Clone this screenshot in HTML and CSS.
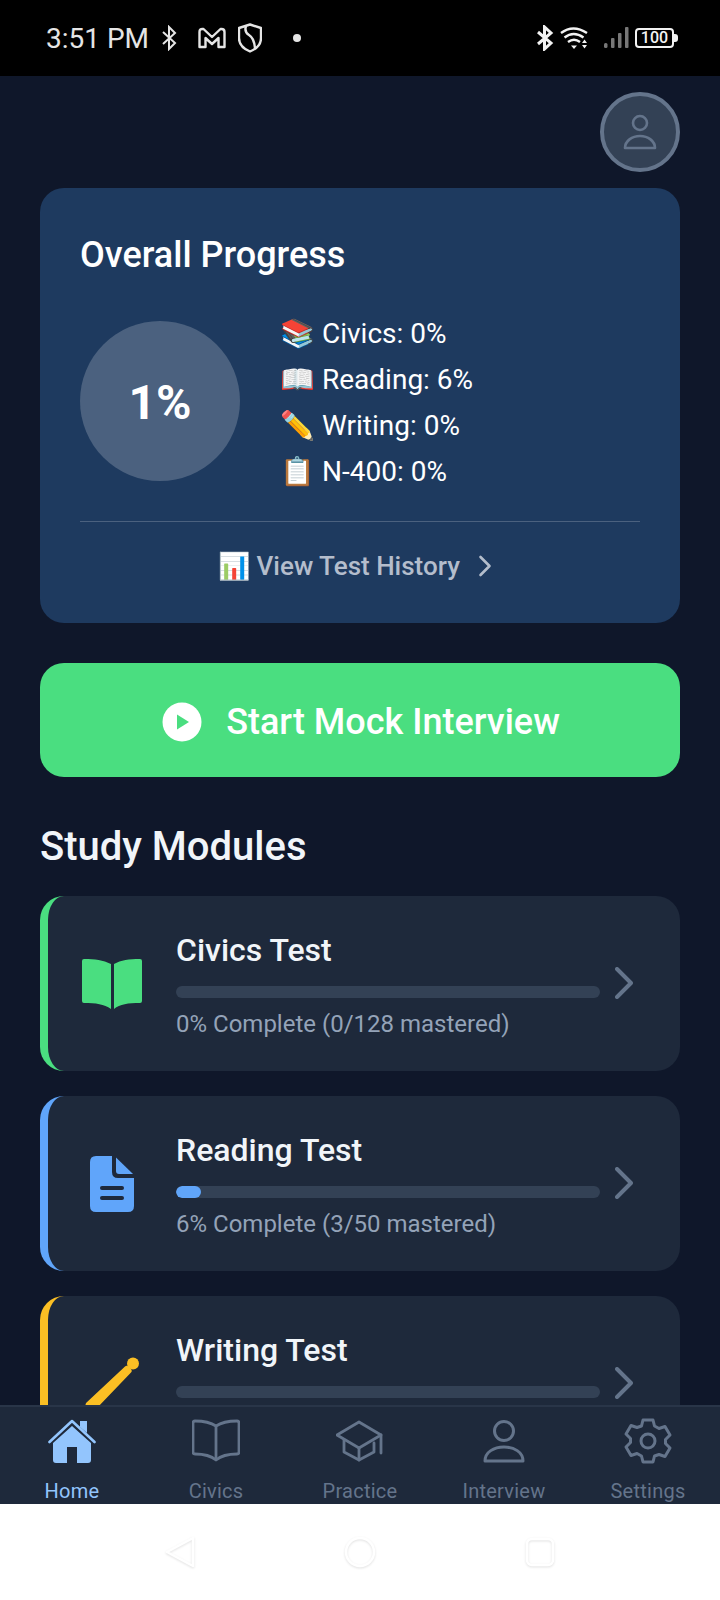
FILE: index.html
```html
<!DOCTYPE html>
<html>
<head>
    <title>Citizenship Study</title>
    <link rel="stylesheet" href="styles.css">
</head>
<body>
    <div class="app">
        <div class="status-bar">
            <span class="clock">3:51 PM</span>
            <svg class="st-bt" width="16" height="26" viewBox="0 0 16 26" fill="none" stroke="#e5e5e5" stroke-width="2"><path d="M2 7l12 11-6 6V2l6 6L2 19"/></svg>
            <svg class="st-m" width="28" height="22" viewBox="0 0 28 22" fill="none" stroke="#e5e5e5" stroke-width="2.400" stroke-linejoin="round"><path d="M1.500 20V5q0-3 3-3h1L14 10l8.500-8h1q3 0 3 3v15h-6V11l-6.500 6-6.500-6v9z"/></svg>
            <svg class="st-shield" width="24" height="30" viewBox="0 0 24 30" fill="none" stroke="#e5e5e5" stroke-width="2.400" stroke-linejoin="round"><path d="M12 1.500 23 5v10q0 9-11 13.500Q1 24 1 15V5z"/><path d="M8 3q-2 6 3 9t6 13"/></svg>
            <span class="st-dot"></span>
            <span class="st-spacer"></span>
            <svg class="st-bt2" width="18" height="26" viewBox="0 0 18 26" fill="none" stroke="#f2f2f2" stroke-width="3"><path d="M2 7l13 11-6.500 6V2L15 8 2 19"/></svg>
            <svg class="st-wifi" width="28" height="24" viewBox="0 0 28 24" fill="none" stroke="#f2f2f2" stroke-width="2.400"><path d="M1 7q12-9 26 0"/><path d="M4.500 11.500q9-7 19 0"/><path d="M8 16q6-4.500 12 0"/><path d="M11 19.500h6l-3 3.500z" fill="#f2f2f2" stroke="none"/><path d="M22 17h5l-2.500-3.500zM22 19h5l-2.500 3.500z" fill="#f2f2f2" stroke="none"/></svg>
            <svg class="st-signal" width="25" height="22" viewBox="0 0 25 22" fill="#777"><rect x="0" y="16" width="3.500" height="5" rx="1.500"/><rect x="7" y="11" width="3.500" height="10" rx="1"/><rect x="14" y="6" width="3.500" height="15" rx="1"/><rect x="21" y="0" width="3.500" height="21" rx="1"/></svg>
            <div class="battery"><span class="battery-body">100</span><span class="battery-tip"></span></div>
        </div>

        <div class="main">
            <div class="top-row">
                <div class="avatar">
                    <svg width="40" height="40" viewBox="0 0 40 40" fill="none" stroke="#64748b" stroke-width="2.600"><circle cx="20" cy="11" r="7"/><path d="M5 36c0-7 7-12 15-12s15 5 15 12z" stroke-linejoin="round"/></svg>
                </div>
            </div>

            <div class="progress-card">
                <h2 class="progress-title">Overall Progress</h2>
                <div class="progress-row">
                    <div class="progress-circle">1%</div>
                    <div class="progress-stats">
                        <div class="stat"><span class="emoji">📚</span>Civics: 0%</div>
                        <div class="stat"><span class="emoji">📖</span>Reading: 6%</div>
                        <div class="stat"><span class="emoji">✏️</span>Writing: 0%</div>
                        <div class="stat"><span class="emoji">📋</span>N-400: 0%</div>
                    </div>
                </div>
                <div class="history">
                    <span>📊 View Test History</span>
                    <svg width="14" height="22" viewBox="0 0 14 22" fill="none" stroke="#b4bdcc" stroke-width="2.600" stroke-linecap="round" stroke-linejoin="round"><path d="M2.500 2l9 9-9 9"/></svg>
                </div>
            </div>

            <div class="start-btn">
                <svg width="40" height="40" viewBox="0 0 40 40"><circle cx="20" cy="20" r="19.500" fill="#fff"/><path d="M15 12.500v15l12-7.500z" fill="#4ade80"/></svg>
                <span>Start Mock Interview</span>
            </div>

            <h2 class="section-title">Study Modules</h2>

            <div class="module green">
                <div class="module-icon">
                    <svg width="60" height="50" viewBox="0 0 60 50" fill="#4ade80"><path d="M0 2q0-2 2-2c11 0 19 1 27 5v45c-7-5-15-6-27-6q-2 0-2-2z"/><path d="M60 2q0-2-2-2C47 0 39 1 32 5v45c6-5 14-6 26-6q2 0 2-2z"/></svg>
                </div>
                <div class="module-body">
                    <div class="module-name">Civics Test</div>
                    <div class="bar"></div>
                    <div class="module-sub">0% Complete (0/128 mastered)</div>
                </div>
                <svg class="chevron" width="18" height="32" viewBox="0 0 18 32" fill="none" stroke="#64748b" stroke-width="4" stroke-linecap="round" stroke-linejoin="round"><path d="M2 2l14 14L2 30"/></svg>
            </div>

            <div class="module blue">
                <div class="module-icon">
                    <svg width="44" height="56" viewBox="0 0 44 56" fill="#60a5fa"><path d="M6 0h16v16q0 6 6 6h16v28q0 6-6 6H6q-6 0-6-6V6q0-6 6-6z"/><path d="M26 1.500 43 18H29q-3 0-3-3z"/><rect x="10" y="30" width="24" height="4" rx="2" fill="#1e293b"/><rect x="10" y="40" width="24" height="4" rx="2" fill="#1e293b"/></svg>
                </div>
                <div class="module-body">
                    <div class="module-name">Reading Test</div>
                    <div class="bar"><div class="bar-fill" style="width: 6%"></div></div>
                    <div class="module-sub">6% Complete (3/50 mastered)</div>
                </div>
                <svg class="chevron" width="18" height="32" viewBox="0 0 18 32" fill="none" stroke="#64748b" stroke-width="4" stroke-linecap="round" stroke-linejoin="round"><path d="M2 2l14 14L2 30"/></svg>
            </div>

            <div class="module yellow">
                <div class="module-icon">
                    <svg width="60" height="60" viewBox="0 0 60 60" fill="#fbbf24"><circle cx="51" cy="9.500" r="6"/><path d="M43 12.500q1.500-1.500 3.500 0l2.500 2.500q1.500 2 0 3.500L15 54 1 60l3-11z"/></svg>
                </div>
                <div class="module-body">
                    <div class="module-name">Writing Test</div>
                    <div class="bar"></div>
                    <div class="module-sub"></div>
                </div>
                <svg class="chevron" width="18" height="32" viewBox="0 0 18 32" fill="none" stroke="#64748b" stroke-width="4" stroke-linecap="round" stroke-linejoin="round"><path d="M2 2l14 14L2 30"/></svg>
            </div>
        </div>

        <div class="nav">
            <div class="nav-item active">
                <svg width="48" height="46" viewBox="0 0 48 46" fill="#93c5fd"><path d="M32 3h7v12l-7-6z"/><path d="M24 8 5 25v17q0 3 3 3h11V29h10v16h11q3 0 3-3V25z"/><path d="M1.500 24 24 3l22.500 21" fill="none" stroke="#93c5fd" stroke-width="2.600" stroke-linecap="round" stroke-linejoin="round"/></svg>
                <span>Home</span>
            </div>
            <div class="nav-item">
                <svg width="48" height="46" viewBox="0 0 48 46" fill="none" stroke="#64748b" stroke-width="2.800" stroke-linejoin="round"><path d="M24 8C18 4 10 3 3 3q-2 0-2 2v29q0 2 2 2c8 0 15 1 21 6 6-5 13-6 21-6q2 0 2-2V5q0-2-2-2C38 3 30 4 24 8z"/><path d="M24 8v34"/></svg>
                <span>Civics</span>
            </div>
            <div class="nav-item">
                <svg width="48" height="46" viewBox="0 0 48 46" fill="none" stroke="#64748b" stroke-width="2.800" stroke-linejoin="round" stroke-linecap="round"><path d="M23 4 1 17l22 13 22-13z"/><path d="M8 22v12l15 8 15-8V25"/><path d="M23 30v12"/><path d="M45 17v18"/></svg>
                <span>Practice</span>
            </div>
            <div class="nav-item">
                <svg width="48" height="46" viewBox="0 0 48 46" fill="none" stroke="#64748b" stroke-width="3" stroke-linejoin="round"><circle cx="24" cy="13" r="9.500"/><path d="M5 43c0-9 9-14 19-14s19 5 19 14z"/></svg>
                <span>Interview</span>
            </div>
            <div class="nav-item">
                <svg width="48" height="46" viewBox="0 0 48 46" fill="none" stroke="#64748b" stroke-width="3" stroke-linejoin="round"><circle cx="24" cy="23" r="7"/><path d="M19 2h10l1.500 6 4.500 2.500 6-2 5 8.500-4.500 4.500v4l4.500 4.500-5 8.500-6-2L30.500 38 29 44H19l-1.500-6-4.500-2.500-6 2-5-8.500 4.500-4.500v-4L2 16l5-8.500 6 2L17.500 8z"/></svg>
                <span>Settings</span>
            </div>
        </div>

        <div class="system-bar">
            <svg class="sys-icon" width="32" height="32" viewBox="0 0 32 32" fill="none" stroke="#fff" stroke-width="2.500" stroke-linejoin="round"><path d="M29 2v28L3 16z"/></svg>
            <svg class="sys-icon" width="32" height="32" viewBox="0 0 32 32" fill="none" stroke="#fff" stroke-width="2.500"><circle cx="16" cy="16" r="14"/></svg>
            <svg class="sys-icon" width="32" height="32" viewBox="0 0 32 32" fill="none" stroke="#fff" stroke-width="2.500"><rect x="3" y="3" width="26" height="26" rx="5"/></svg>
        </div>
    </div>
</body>
</html>
```
FILE: styles.css
```css
* {
    box-sizing: border-box;
}

body {
    margin: 0;
    font-family: Roboto, "Noto Sans", sans-serif;
    background-color: #0f172a;
}

.app {
    width: 720px;
    height: 1600px;
    display: flex;
    flex-direction: column;
    overflow: hidden;
}

/* Status bar */
.status-bar {
    height: 76px;
    flex-shrink: 0;
    background-color: #000;
    display: flex;
    align-items: center;
    padding: 0 42px 0 46px;
    color: #e5e5e5;
}

.clock {
    font-size: 28px;
    margin-right: 12px;
}

.st-bt {
    margin-right: 21px;
}

.st-m {
    margin-right: 12px;
}

.st-dot {
    width: 8px;
    height: 8px;
    border-radius: 50%;
    background-color: #e5e5e5;
    margin-left: 31px;
}

.st-spacer {
    flex: 1;
}

.st-bt2 {
    margin-right: 6px;
}

.st-wifi {
    margin-right: 16px;
}

.st-signal {
    margin-right: 6px;
}

.battery {
    display: flex;
    align-items: center;
}

.battery-body {
    width: 39px;
    height: 20px;
    border: 2.500px solid #f2f2f2;
    border-radius: 4px;
    font-size: 16px;
    font-weight: 500;
    line-height: 15px;
    text-align: center;
    color: #f2f2f2;
}

.battery-tip {
    width: 4px;
    height: 8px;
    background-color: #f2f2f2;
    border-radius: 0 3px 3px 0;
}

/* Main scrolling area */
.main {
    flex: 1;
    overflow: hidden;
    padding: 16px 40px 0;
}

.top-row {
    display: flex;
    justify-content: flex-end;
}

.avatar {
    width: 80px;
    height: 80px;
    border-radius: 50%;
    background-color: #334155;
    border: 4px solid #64748b;
    display: flex;
    align-items: center;
    justify-content: center;
}

.progress-card {
    margin-top: 16px;
    height: 435px;
    border-radius: 24px;
    background-color: #1e3a5f;
    padding: 40px;
}

.progress-title {
    margin: 0;
    padding-top: 1px;
    font-size: 36px;
    font-weight: 500;
    line-height: 52px;
    color: #fff;
}

.progress-row {
    margin-top: 29px;
    display: flex;
    align-items: flex-start;
    gap: 40px;
    height: 184px;
}

.progress-circle {
    width: 160px;
    height: 160px;
    margin-top: 11px;
    padding-top: 3px;
    border-radius: 50%;
    background-color: rgba(255, 255, 255, 0.2);
    display: flex;
    align-items: center;
    justify-content: center;
    font-size: 48px;
    font-weight: 700;
    color: #fff;
}

.progress-stats {
    padding-top: 1px;
}

.stat {
    height: 46px;
    line-height: 46px;
    font-size: 28px;
    color: #fff;
    white-space: nowrap;
}

.emoji {
    margin-right: 7px;
}

.history {
    margin-top: 27px;
    padding: 26px 10px 0 0;
    border-top: 1px solid rgba(255, 255, 255, 0.2);
    display: flex;
    align-items: center;
    justify-content: center;
    gap: 18px;
    font-size: 26px;
    font-weight: 500;
    line-height: 36px;
    color: #b4bdcc;
}

.start-btn {
    margin-top: 40px;
    height: 114px;
    padding: 4px 0 0 2px;
    border-radius: 24px;
    background-color: #4ade80;
    display: flex;
    align-items: center;
    justify-content: center;
    gap: 24px;
    font-size: 36px;
    font-weight: 500;
    color: #fff;
}

.section-title {
    margin: 45px 0 24px;
    font-size: 40px;
    font-weight: 500;
    line-height: 50px;
    color: #f1f5f9;
}

/* Study module cards */
.module {
    height: 175px;
    margin-bottom: 25px;
    border-radius: 24px;
    background-color: #1e293b;
    border-left: 8px solid #4ade80;
    display: flex;
    align-items: center;
    padding: 0 47px 0 0;
}

.module.blue {
    border-left-color: #60a5fa;
}

.module.yellow {
    border-left-color: #fbbf24;
}

.module-icon {
    width: 128px;
    display: flex;
    justify-content: center;
}

.module-body {
    flex: 1;
}

.module-name {
    font-size: 32px;
    font-weight: 500;
    line-height: 40px;
    color: #f1f5f9;
}

.bar {
    margin-top: 16px;
    height: 12px;
    border-radius: 6px;
    background-color: #334155;
    overflow: hidden;
}

.bar-fill {
    height: 100%;
    border-radius: 6px;
    background-color: #60a5fa;
}

.module-sub {
    margin-top: 11px;
    height: 29px;
    font-size: 24px;
    line-height: 30px;
    color: #94a3b8;
}

.chevron {
    margin-left: 15px;
    margin-top: -2px;
}

/* Bottom navigation */
.nav {
    height: 99px;
    flex-shrink: 0;
    background-color: #1e293b;
    border-top: 2px solid #293548;
    display: flex;
    padding-top: 11px;
}

.nav-item {
    width: 144px;
    display: flex;
    flex-direction: column;
    align-items: center;
    gap: 14px;
    font-size: 20px;
    line-height: 26px;
    letter-spacing: 0.25px;
    color: #64748b;
}

.nav-item.active {
    color: #93c5fd;
}

.system-bar {
    height: 96px;
    flex-shrink: 0;
    background-color: #fff;
    display: flex;
    align-items: center;
    justify-content: center;
    gap: 148px;
}

.sys-icon {
    filter: drop-shadow(0 1px 1px rgba(0, 0, 0, 0.12));
}
```
